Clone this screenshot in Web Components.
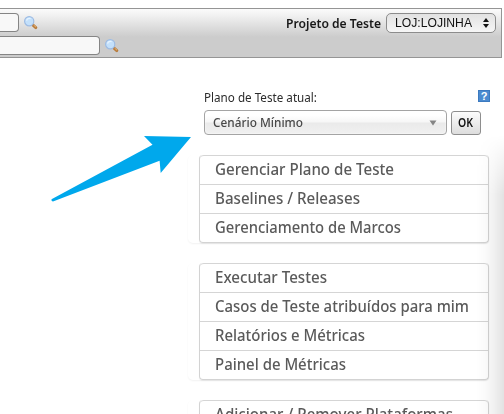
<!DOCTYPE html>
<html lang="pt-BR">
<head>
<meta charset="utf-8">
<title>Projeto de Teste</title>
<style>
html,body{margin:0;height:414px;overflow:hidden;background:#fff;font-family:"Noto Sans","Open Sans",sans-serif}
</style>
</head>
<body>
<test-page></test-page>
<script>
const define=(name,html,init)=>customElements.define(name,class extends HTMLElement{
  constructor(){super();this.attachShadow({mode:'open'}).innerHTML=html;}
  connectedCallback(){if(init)init(this,this.shadowRoot);}
});

/* Condenses a line of text to the width given by its "w" attribute. */
define('fit-text',`<style>:host{display:block;white-space:pre;overflow:visible;flex:none}
span{display:inline-block;transform-origin:0 50%;white-space:pre}</style><span><slot></slot></span>`,(el,root)=>{
  const w=+el.getAttribute('w'),s=root.querySelector('span');
  el.style.width=w+'px';
  s.style.transform=`scaleX(${w/s.getBoundingClientRect().width})`;
});

define('search-icon',`<style>:host{display:block;width:14px;height:14px;flex:none}svg{display:block}</style>
<svg width="14" height="14" viewBox="0 0 14 14"><path d="M9 9.2 11.8 11.6" stroke="#b77b3c" stroke-width="3" stroke-linecap="round"/><path d="m9.6 9.1 2.4 2.1" stroke="#e8b777" stroke-width="1"/><circle cx="5.2" cy="5.2" r="4.6" fill="#c3e0fb" stroke="#9dbbe3" stroke-width="1.2"/><path d="M2.6 4.6a2.8 2.8 0 0 1 4-2" stroke="#e5f3ff" stroke-width="1.3" fill="none"/></svg>`);

define('help-icon',`<style>:host{display:flex;width:12px;height:12px;background:#4b8bd0;box-shadow:inset 0 0 0 1px #3c7ac0;align-items:center;justify-content:center;color:#fff;font:bold 11px/12px "Liberation Sans",sans-serif}</style>?`);

define('search-field',`<style>:host{display:flex;align-items:center;gap:5px;height:19px}
i{display:block;box-sizing:border-box;height:19px;width:var(--w);border:1px solid #858585;border-left:0;border-radius:0 4px 4px 0;background:#f8f8f8}</style><i></i><search-icon></search-icon>`);

define('project-select',`<style>:host{display:flex;box-sizing:border-box;width:110px;height:20px;border:1px solid #8c8c8c;border-radius:5px;background:linear-gradient(#e2e2e2,#f6f6f6);align-items:center;justify-content:space-between;padding:0 6px 0 8px;color:#111;font:13px/18px "Liberation Sans",sans-serif}
svg{display:block}</style><fit-text w="77"><slot></slot></fit-text><svg width="6" height="10" viewBox="0 0 6 10"><path d="M0 4 3 0l3 4zM0 6l3 4 3-4z" fill="#111"/></svg>`);

define('top-bar',`<style>:host{display:flex;justify-content:space-between;box-sizing:border-box;width:502px;height:50px;border:1px solid #959595;border-left:0;background:linear-gradient(#fbfbfb 0,#f0f0f0 7px,#ccc 28px);padding:4px 5px 0 0}
.l{display:flex;flex-direction:column;gap:4px}.r{display:flex;align-items:center;height:20px;gap:5px}
b{display:block;font-weight:600;font-size:12.5px;line-height:20px;padding-top:2px;color:#181818}</style>
<div class="l"><search-field style="--w:19px"></search-field><search-field style="--w:100px"></search-field></div>
<div class="r"><b><fit-text w="95">Projeto de Teste</fit-text></b><project-select>LOJ:LOJINHA</project-select></div>`);

define('plan-picker',`<style>:host{display:block;width:286px;color:#2b2b2b}
.t{display:flex;justify-content:space-between;height:20px;font-size:12px;line-height:16px}
.c{display:flex;gap:4px;align-items:flex-end;height:25px}
.s{box-sizing:border-box;width:243px;height:25px;border:1px solid #a4a4a4;border-radius:4px;background:linear-gradient(#fff 20%,#f6f6f6 48%,#eaeaea 52%,#f0f0f0);display:flex;align-items:center;justify-content:space-between;padding:0 9px 0 8px;font-size:12.5px;line-height:22px;color:#484848;font-weight:500;box-shadow:inset 0 0 2px #fff}
.k{box-sizing:border-box;width:30px;height:24px;border:1px solid #8e8e8e;border-radius:3px;background:linear-gradient(#fcfcfc,#ddd);padding-left:6px;font-size:12.5px;font-weight:600;line-height:21px;color:#111}</style>
<div class="t"><fit-text w="113">Plano de Teste atual:</fit-text><help-icon></help-icon></div>
<div class="c"><div class="s"><fit-text w="90">Cenário Mínimo</fit-text><svg width="8" height="6" viewBox="0 0 8 6"><path d="M.5.5h7L4 5.5z" fill="#858585"/></svg></div><div class="k"><fit-text w="15">OK</fit-text></div></div>`);

define('menu-item',`<style>:host{display:block;box-sizing:border-box;height:29px;border-top:1px solid #d5d5d5;padding-left:15px;font-size:16px;font-weight:500;line-height:26px;color:#5a5a5a}</style><slot></slot>`);

define('menu-group',`<style>:host{display:block;box-sizing:border-box;width:301px;padding-left:11px;border-radius:5px;box-shadow:0 1px 2px #0000000e}
div{box-sizing:border-box;border:1px solid #d3d3d3;border-top:0;border-radius:4px;overflow:hidden;box-shadow:0 1px 1px #0001}
::slotted(:first-child){border-radius:4px 4px 0 0}</style><div><slot></slot></div>`);

define('side-shadow',`<style>:host{display:block;position:absolute;right:0;top:135px;width:28px;height:279px;background:linear-gradient(90deg,transparent,#00000005 35%,#00000010 68%,#0000001d);-webkit-mask:linear-gradient(transparent,#000 60px);mask:linear-gradient(transparent,#000 60px)}</style>`);

define('pointer-arrow',`<style>:host{display:block;position:absolute;left:50px;top:134px}svg{display:block}</style><svg width="144" height="70" viewBox="50 134 144 70"><path d="M144 136 191 137 160.7 173 159.6 160.8 53 201.4Q51 201.5 51.5 199.3L152.5 144.8Z" fill="#00a8ec"/></svg>`);

define('test-page',`<style>:host{display:block;position:relative;width:504px;height:414px;overflow:hidden;padding-top:8px;box-sizing:border-box}
plan-picker{margin:32px 0 0 204px}.m{display:flex;flex-direction:column;gap:20px;margin:20px 0 0 188px}</style>
<top-bar></top-bar>
<plan-picker></plan-picker>
<div class="m">
<menu-group><menu-item><fit-text w="179">Gerenciar Plano de Teste</fit-text></menu-item><menu-item><fit-text w="145">Baselines / Releases</fit-text></menu-item><menu-item><fit-text w="186">Gerenciamento de Marcos</fit-text></menu-item></menu-group>
<menu-group><menu-item><fit-text w="112">Executar Testes</fit-text></menu-item><menu-item><fit-text w="254">Casos de Teste atribuídos para mim</fit-text></menu-item><menu-item><fit-text w="150">Relatórios e Métricas</fit-text></menu-item><menu-item><fit-text w="131">Painel de Métricas</fit-text></menu-item></menu-group>
<menu-group><menu-item><fit-text w="238">Adicionar / Remover Plataformas</fit-text></menu-item><menu-item></menu-item></menu-group>
</div>
<side-shadow></side-shadow>
<pointer-arrow></pointer-arrow>`);
</script>
</body>
</html>
